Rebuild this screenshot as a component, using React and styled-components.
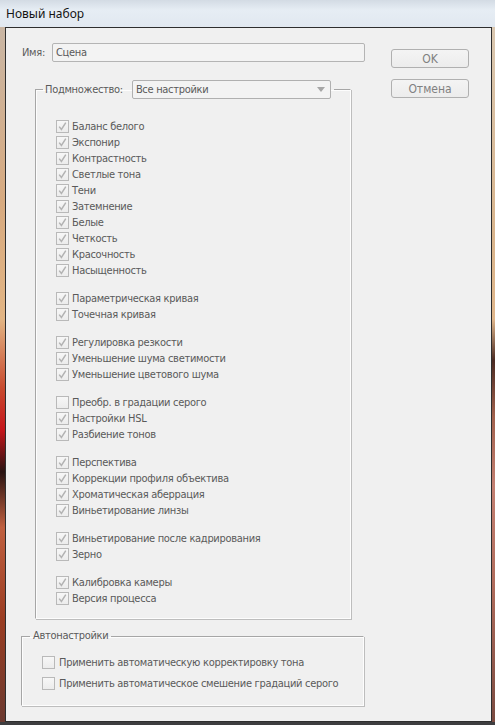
import { createGlobalStyle, styled } from "styled-components";

const GlobalStyle = createGlobalStyle`
  html, body {
    margin: 0;
    padding: 0;
    background: #3a3a3a;
  }
  body {
    font-family: "DejaVu Sans Condensed", "DejaVu Sans", "Liberation Sans", sans-serif;
    font-size: 11px;
    letter-spacing: -0.3px;
  }
`;

const subsetGroups = [
  [
    ["Баланс белого", true],
    ["Экспонир", true],
    ["Контрастность", true],
    ["Светлые тона", true],
    ["Тени", true],
    ["Затемнение", true],
    ["Белые", true],
    ["Четкость", true],
    ["Красочность", true],
    ["Насыщенность", true],
  ],
  [
    ["Параметрическая кривая", true],
    ["Точечная кривая", true],
  ],
  [
    ["Регулировка резкости", true],
    ["Уменьшение шума светимости", true],
    ["Уменьшение цветового шума", true],
  ],
  [
    ["Преобр. в градации серого", false],
    ["Настройки HSL", true],
    ["Разбиение тонов", true],
  ],
  [
    ["Перспектива", true],
    ["Коррекции профиля объектива", true],
    ["Хроматическая аберрация", true],
    ["Виньетирование линзы", true],
  ],
  [
    ["Виньетирование после кадрирования", true],
    ["Зерно", true],
  ],
  [
    ["Калибровка камеры", true],
    ["Версия процесса", true],
  ],
];

const autoItems = [
  "Применить автоматическую корректировку тона",
  "Применить автоматическое смешение градаций серого",
];

const Checkbox = ({ checked }) => (
  <Box>
    {checked && (
      <svg width="11" height="11" viewBox="0 0 11 11">
        <path d="M2.2 5.6 L4.4 8.4 L8.8 1.6" fill="none" stroke="#b3b3b3" strokeWidth="1.5" />
      </svg>
    )}
  </Box>
);

const App = () => {
  return (
    <>
      <GlobalStyle />
      <Window>
        <TitleBar>Новый набор</TitleBar>
        <FrameRow>
          <LeftEdge />
          <Client>
            <MainColumn>
              <NameRow>
                <FieldLabel>Имя:</FieldLabel>
                <NameInput>Сцена</NameInput>
              </NameRow>

              <SubsetBox>
                <SubsetLegend>
                  <span>Подмножество:</span>
                  <Select>
                    <span>Все настройки</span>
                    <Arrow />
                  </Select>
                </SubsetLegend>
                <ItemList>
                  {subsetGroups.map((group, gi) => (
                    <Group key={gi}>
                      {group.map(([text, checked]) => (
                        <Row key={text} $h={16}>
                          <Checkbox checked={checked} />
                          <RowText>{text}</RowText>
                        </Row>
                      ))}
                    </Group>
                  ))}
                </ItemList>
              </SubsetBox>

              <AutoBox>
                <AutoLegend>Автонастройки</AutoLegend>
                <AutoList>
                  {autoItems.map((text) => (
                    <Row key={text} $h={21} $gap={4}>
                      <Checkbox checked={false} />
                      <RowText>{text}</RowText>
                    </Row>
                  ))}
                </AutoList>
              </AutoBox>
            </MainColumn>

            <Buttons>
              <Button>OK</Button>
              <Button>Отмена</Button>
            </Buttons>
          </Client>
          <RightEdge />
        </FrameRow>
        <BottomEdge />
      </Window>
    </>
  );
};

export default App;

const Window = styled.div`
  width: 495px;
  height: 725px;
  display: flex;
  flex-direction: column;
  overflow: hidden;
  background: linear-gradient(to bottom, #d3dbe4 0px, #e6edf4 10px, #e1e8f0 27px, #3c3c3c 27px);
`;

const TitleBar = styled.div`
  height: 27px;
  flex: none;
  display: flex;
  align-items: center;
  padding-left: 6px;
  padding-bottom: 1px;
  box-sizing: border-box;
  font-family: "Noto Sans", "Open Sans", sans-serif;
  font-size: 12px;
  letter-spacing: 0;
  color: #141414;
`;

const FrameRow = styled.div`
  flex: 1;
  display: flex;
`;

const LeftEdge = styled.div`
  width: 5px;
  flex: none;
  background: linear-gradient(
    to bottom,
    #c9b6a4 0%,
    #d7aa80 25%,
    #e2b584 42%,
    #c84a2e 52%,
    #c5151b 58%,
    #2a1412 64%,
    #c06040 72%,
    #9b3d22 85%,
    #6b3a30 100%
  );
`;

const RightEdge = styled.div`
  width: 3px;
  flex: none;
  background: linear-gradient(
    to bottom,
    #d9c7b0 0%,
    #d8b48c 30%,
    #e0b78c 42%,
    #4a2a22 48%,
    #a0604c 56%,
    #c38072 66%,
    #b06c5c 80%,
    #7a4a40 100%
  );
`;

const BottomEdge = styled.div`
  height: 3px;
  flex: none;
  background: #3e3e40;
`;

const Client = styled.div`
  flex: 1;
  display: flex;
  background: #f0f0f0;
  border: 1px solid #2e2e2e;
  box-shadow: 1px 0 0 #e8d8cc;
`;

const MainColumn = styled.div`
  width: 359px;
  flex: none;
  padding: 15px 0 0 15px;
  box-sizing: border-box;
`;

const NameRow = styled.div`
  display: flex;
  align-items: center;
  height: 19px;
`;

const FieldLabel = styled.span`
  width: 30px;
  padding-left: 1px;
  color: #5c5c5c;
`;

const NameInput = styled.div`
  width: 314px;
  height: 19px;
  box-sizing: border-box;
  border: 1px solid #b4b4b4;
  border-radius: 2px;
  background: #f3f3f3;
  padding-left: 3px;
  display: flex;
  align-items: center;
  color: #5a5a5a;
`;

const Fieldset = styled.fieldset`
  margin: 0;
  box-sizing: border-box;
  border: 1px solid #a6a6a6;
  border-right-color: #fdfdfd;
  border-bottom-color: #fdfdfd;
  box-shadow: inset 1px 1px 0 #fdfdfd, 1px 1px 0 #bdbdbd;
  min-inline-size: 0;
`;

const SubsetBox = styled(Fieldset)`
  width: 316px;
  margin: 18px 0 0 14px;
  padding: 0 0 12px 7px;
`;

const SubsetLegend = styled.legend`
  display: flex;
  align-items: center;
  padding: 0 3px 0 2px;
  color: #5a5a5a;
`;

const Select = styled.div`
  margin-left: 9px;
  width: 199px;
  height: 19px;
  box-sizing: border-box;
  border: 1px solid #b0b0b0;
  border-radius: 2px;
  background: #f3f3f3;
  display: flex;
  align-items: center;
  justify-content: space-between;
  padding: 0 5px 0 3px;
  color: #5a5a5a;
`;

const Arrow = styled.span`
  width: 0;
  height: 0;
  border-left: 4px solid transparent;
  border-right: 4px solid transparent;
  border-top: 5px solid #a6a6a6;
`;

const ItemList = styled.div`
  padding: 19px 0 0 13px;
  display: flex;
  flex-direction: column;
  gap: 12px;
`;

const Group = styled.div`
  display: flex;
  flex-direction: column;
`;

const Row = styled.div`
  display: flex;
  align-items: center;
  height: ${(p) => p.$h}px;
  gap: ${(p) => p.$gap ?? 3}px;
`;

const Box = styled.span`
  width: 13px;
  height: 13px;
  box-sizing: border-box;
  border: 1px solid #b9b9b9;
  background: linear-gradient(to bottom, #f7f7f7, #ececec);
  display: flex;
  align-items: center;
  justify-content: center;
  flex: none;
`;

const RowText = styled.span`
  color: #5a5a5a;
  white-space: nowrap;
`;

const AutoBox = styled(Fieldset)`
  width: 343px;
  margin-top: 10px;
  padding: 0 0 11px 8px;
`;

const AutoLegend = styled.legend`
  padding: 0 3px;
  line-height: 14px;
  color: #5a5a5a;
`;

const AutoList = styled.div`
  padding: 9px 0 0 12px;
  display: flex;
  flex-direction: column;
`;

const Buttons = styled.div`
  display: flex;
  flex-direction: column;
  gap: 11px;
  padding: 21px 0 0 26px;
`;

const Button = styled.div`
  width: 78px;
  height: 19px;
  box-sizing: border-box;
  border: 1px solid #b0b0b0;
  border-radius: 3px;
  background: linear-gradient(to bottom, #f4f4f4, #ececec);
  display: flex;
  align-items: center;
  justify-content: center;
  font-size: 12px;
  letter-spacing: 0;
  color: #808080;
`;
